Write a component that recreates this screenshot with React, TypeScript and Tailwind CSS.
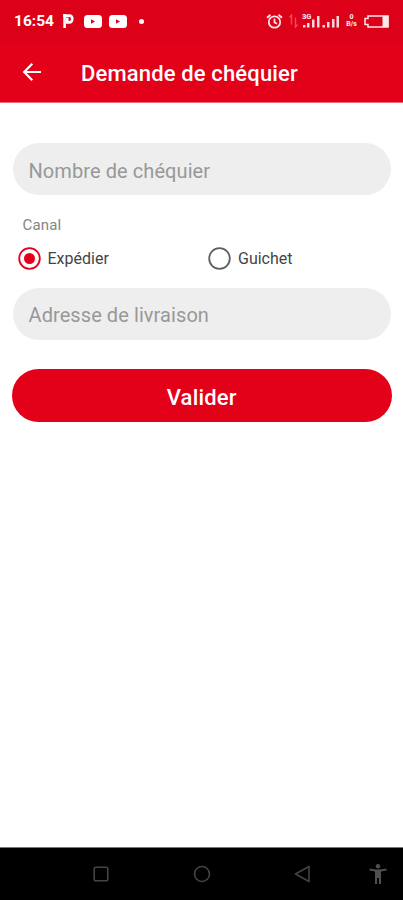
import type { ReactNode } from "react";

const canaux = [
  { id: "expedier", label: "Expédier", checked: true },
  { id: "guichet", label: "Guichet", checked: false },
];

function YoutubeIcon() {
  return (
    <svg width="18" height="13" viewBox="0 0 18 13">
      <rect width="18" height="13" rx="3.5" fill="#fff" />
      <path d="M7 4.300v4.400l4-2.200z" fill="#dc0019" />
    </svg>
  );
}

function SignalIcons() {
  return (
    <svg width="38" height="18" viewBox="0 0 38 18" fill="#fff" opacity="0.85">
      <text x="0" y="6.500" fontSize="7.500" fontWeight="900" fontFamily="Roboto, sans-serif">
        3G
      </text>
      <rect x="1" y="13" width="2.500" height="2.500" />
      <rect x="5" y="11" width="2.500" height="4.500" />
      <rect x="10" y="7.500" width="2.500" height="8" />
      <rect x="15" y="4" width="2.500" height="11.500" />
      <rect x="20.500" y="13" width="2.500" height="2.500" />
      <rect x="25" y="10" width="2.500" height="5.500" />
      <rect x="30" y="7" width="2.500" height="8.500" />
      <rect x="34.500" y="4" width="2.500" height="11.500" />
    </svg>
  );
}

function StatusBar() {
  return (
    <div className="flex h-[42px] items-center bg-[#dc0019] pr-3.5 pl-3.5 text-white">
      <span className="w-[48px] pt-px text-[15.500px] leading-none font-bold">16:54</span>
      <svg width="12" height="16" viewBox="0 0 12 16" fill="none" stroke="#fff" strokeWidth="2.600">
        <path d="M2.600 1v14" />
        <path d="M1 2.600h6.300c4 0 4 6.800 0 6.800H5.300V4.500" />
      </svg>
      <span className="ml-[9.500px] flex gap-[7px]">
        <YoutubeIcon />
        <YoutubeIcon />
      </span>
      <span className="ml-[12.500px] size-[5px] rounded-full bg-white" />
      <span className="ml-auto flex items-center">
        <svg width="17" height="17" viewBox="0 0 17 17" fill="none" stroke="#fff" strokeWidth="1.800" opacity="0.900">
          <circle cx="8.500" cy="9" r="5.700" />
          <path d="M1 4.800l3.500-3M16 4.800l-3.500-3M8.500 5.800v3.700l2.500 1.300" />
        </svg>
        <svg className="ml-[6px]" width="9" height="14" viewBox="0 0 9 14" fill="none" stroke="#fff" strokeWidth="1.400" opacity="0.300">
          <path d="M2.500 10.500V1L.5 3.500M6.500 3.500V13l2-2.500" />
        </svg>
        <span className="ml-1 flex">
          <SignalIcons />
        </span>
        <span className="ml-[6px] flex w-[11px] flex-col items-center text-[7px] leading-[7.500px] font-black opacity-85">
          <span>0</span>
          <span>B/s</span>
        </span>
        <svg className="ml-[7px]" width="25" height="13" viewBox="0 0 25 13" opacity="0.900">
          <path d="M4 1h20v11H4V9.500H1v-6h3z" fill="none" stroke="#fff" strokeWidth="1.500" />
          <rect x="18.500" y="1" width="6" height="11" fill="#fff" />
        </svg>
      </span>
    </div>
  );
}

function Header() {
  return (
    <header className="flex h-[61px] items-center border-b border-[#ee6c79] bg-[#e30019] pl-[22px] text-white">
      <button type="button" aria-label="Retour">
        <svg width="20" height="20" viewBox="0 0 20 20" fill="none" stroke="#fff" strokeWidth="2.200">
          <path d="M19 10H2.500M10.300 1.700L2.200 10l8.100 8.300" />
        </svg>
      </button>
      <h1 className="ml-[39px] pt-[3px] text-[22px] leading-none font-medium tracking-[0.150px]">
        Demande de chéquier
      </h1>
    </header>
  );
}

function Field({ children }: { children: ReactNode }) {
  return (
    <div className="flex h-[52px] items-center rounded-full bg-[#eeeeee] pl-4 text-[20px] tracking-[0.080px] text-[#989898]">
      {children}
    </div>
  );
}

function NavBar() {
  return (
    <nav className="flex h-[53px] items-center border-t border-[#777] bg-black pl-[93px]">
      <svg width="16" height="16" viewBox="0 0 16 16" fill="none" stroke="#444" strokeWidth="1.600">
        <rect x="1.200" y="1.200" width="13.600" height="13.600" rx="1.800" />
      </svg>
      <svg className="ml-[84px]" width="18" height="18" viewBox="0 0 18 18" fill="none" stroke="#444" strokeWidth="1.600">
        <circle cx="9" cy="9" r="7.500" />
      </svg>
      <svg className="ml-[83px]" width="17" height="18" viewBox="0 0 17 18" fill="none" stroke="#444" strokeWidth="1.600" strokeLinejoin="round">
        <path d="M15 1.500v15L1.500 9z" />
      </svg>
      <svg className="ml-[58px]" width="18" height="20" viewBox="0 0 18 20" fill="#505050">
        <circle cx="9" cy="2.300" r="2.200" />
        <path d="M.5 4.500Q9 6.500 17.500 4.500v2L12 7.500V20h-2v-6H8v6H6V7.500L.5 6.500z" />
      </svg>
    </nav>
  );
}

export default function App() {
  return (
    <div className="flex h-[900px] w-[403px] flex-col bg-white font-['Roboto',sans-serif]">
      <StatusBar />
      <Header />
      <main className="flex flex-1 flex-col pt-10 pr-3 pl-[12.500px]">
        <Field>
          <span className="pt-[3px]">Nombre de chéquier</span>
        </Field>
        <p className="mt-5 ml-2.5 text-[15px] leading-5 tracking-[0.150px] text-[#858585]">Canal</p>
        <div className="mt-[11px] flex h-6 pl-[5px]">
          {canaux.map((canal) => (
            <label
              key={canal.id}
              className="flex w-[190.500px] shrink-0 items-center gap-[7px] text-[16px] text-[#444]"
            >
              <svg width="23" height="23" viewBox="0 0 23 23" fill="none" stroke={canal.checked ? "#e30019" : "#606060"} strokeWidth="1.800">
                <circle cx="11.500" cy="11.500" r="10.300" />
                {canal.checked && <circle cx="11.500" cy="11.500" r="5.500" fill="#e30019" stroke="none" />}
              </svg>
              <span className="pt-[2px]">{canal.label}</span>
            </label>
          ))}
        </div>
        <div className="mt-[18px]">
          <Field>
            <span className="pt-px">Adresse de livraison</span>
          </Field>
        </div>
        <button
          type="button"
          className="mt-[29px] -mr-px -ml-px h-[53px] rounded-full bg-[#e30019] pt-[3px] text-[22px] font-medium tracking-[0.200px] text-white"
        >
          Valider
        </button>
      </main>
      <NavBar />
    </div>
  );
}
